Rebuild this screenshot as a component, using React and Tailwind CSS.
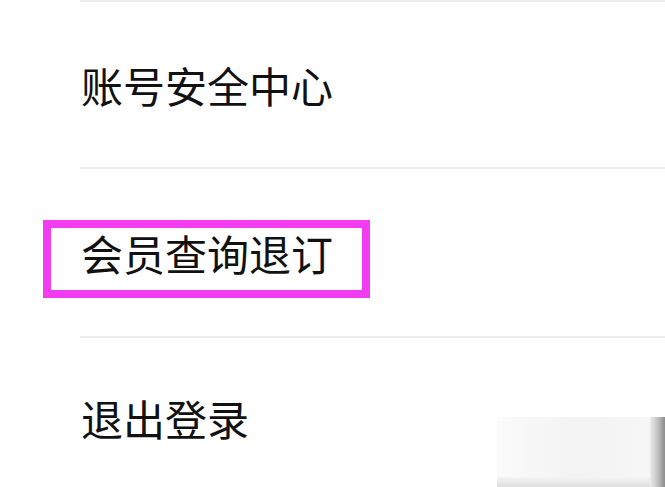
import React from 'react'

const items = [
  { id: 1, label: '账号安全中心', height: 'h-[165px]' },
  { id: 2, label: '会员查询退订', height: 'h-[167px]', marked: true },
  { id: 3, label: '退出登录', height: 'h-[160px]' },
]

const App = () => {
  return (
    <div
      className="relative w-[665px] h-[487px] overflow-hidden bg-white text-[#111111]"
      style={{ fontFamily: '"Noto Sans CJK SC", "Noto Sans", sans-serif' }}
    >
      <div className="flex flex-col pl-[80px]">
        {items.map(item => (
          <div key={item.id} className="flex flex-col">
            <div className="h-[2px] bg-[#ededed]"></div>
            <div className={`${item.height} flex items-center`}>
              <span className="relative text-[42px] leading-none pl-[1px]">
                {item.label}
                {item.marked && (
                  <span className="absolute -left-[37px] -right-[37px] -top-[12px] -bottom-[24px] border-[8px] border-[#f23cf0]"></span>
                )}
              </span>
            </div>
          </div>
        ))}
      </div>

      {/* blurred watermark patch, bottom right */}
      <div className="absolute left-[497px] top-[417px] w-[168px] h-[70px] flex">
        <div className="flex-1 flex flex-col bg-[#f6f6f6]">
          <div className="flex-1 bg-gradient-to-r from-[#fbfbfb] via-[#f3f3f3] to-[#f6f6f6]"></div>
          <div className="h-[10px] bg-gradient-to-b from-[#f5f5f5] to-[#dedede]"></div>
        </div>
        <div className="w-[15px] bg-gradient-to-r from-[#ececec] via-[#c4c4c4] to-[#8c8c8c]"></div>
      </div>
    </div>
  )
}

export default App
